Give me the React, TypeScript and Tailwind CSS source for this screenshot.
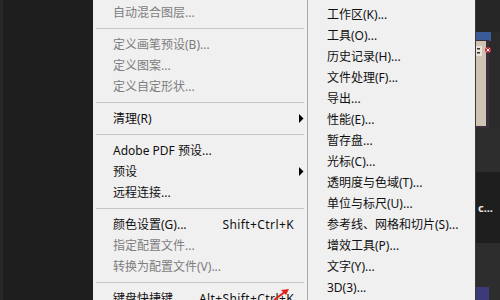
import React from "react";

type Item =
  | { type: "sep" }
  | { type: "item"; label: string; disabled?: boolean; shortcut?: string; arrow?: boolean };

const mainItems: Item[] = [
  { type: "item", label: "自动混合图层...", disabled: true },
  { type: "sep" },
  { type: "item", label: "定义画笔预设(B)...", disabled: true },
  { type: "item", label: "定义图案...", disabled: true },
  { type: "item", label: "定义自定形状...", disabled: true },
  { type: "sep" },
  { type: "item", label: "清理(R)", arrow: true },
  { type: "sep" },
  { type: "item", label: "Adobe PDF 预设..." },
  { type: "item", label: "预设", arrow: true },
  { type: "item", label: "远程连接..." },
  { type: "sep" },
  { type: "item", label: "颜色设置(G)...", shortcut: "Shift+Ctrl+K" },
  { type: "item", label: "指定配置文件...", disabled: true },
  { type: "item", label: "转换为配置文件(V)...", disabled: true },
  { type: "sep" },
  { type: "item", label: "键盘快捷键...", shortcut: "Alt+Shift+Ctrl+K" },
];

const subItems = [
  "工作区(K)...",
  "工具(O)...",
  "历史记录(H)...",
  "文件处理(F)...",
  "导出...",
  "性能(E)...",
  "暂存盘...",
  "光标(C)...",
  "透明度与色域(T)...",
  "单位与标尺(U)...",
  "参考线、网格和切片(S)...",
  "增效工具(P)...",
  "文字(Y)...",
  "3D(3)...",
];

const font = { fontFamily: '"Noto Sans", "Noto Sans CJK SC", sans-serif' };

export default function App() {
  return (
    <div
      className="relative flex h-[300px] w-[500px] overflow-hidden bg-[#1e1e1e] text-[12px] leading-[21px]"
      style={font}
    >
      {/* left dark area */}
      <div className="flex h-full w-[93px] shrink-0">
        <div className="h-full w-[3px] bg-[#272727]" />
        <div className="h-full flex-1 bg-[#1e1e1e]" />
      </div>

      {/* main menu */}
      <div className="flex h-full w-[214px] shrink-0 flex-col bg-[#f0f0f0] pt-[2px]">
        {mainItems.map((it, i) =>
          it.type === "sep" ? (
            <div key={i} className="h-[11px] shrink-0 pl-[3px] pr-[3px] pt-[5px]">
              <div className="h-px bg-[#c5c5c5]" />
            </div>
          ) : (
            <div
              key={i}
              className={`flex h-[21px] shrink-0 items-center pl-[20px] pr-[13px] ${
                it.disabled ? "text-[#7d7d7d]" : "text-[#111111]"
              }`}
            >
              <span className="whitespace-nowrap">{it.label}</span>
              <span className="flex-1" />
              {it.shortcut && (
                <span className="whitespace-nowrap tracking-[0.4px]">{it.shortcut}</span>
              )}
              {it.arrow && (
                <svg width="5" height="9" viewBox="0 0 5 9" className="-mr-[10px]">
                  <path d="M0 0 L4.5 4.5 L0 9 Z" fill="#000" />
                </svg>
              )}
            </div>
          )
        )}
      </div>

      {/* submenu */}
      <div className="flex h-full w-[168px] shrink-0 flex-col border-l border-[#a8a8a8] bg-[#f0f0f0] pt-[4px]">
        {subItems.map((s, i) => (
          <div key={i} className="flex h-[21px] shrink-0 items-center pl-[19px] text-[#111111]">
            <span className="whitespace-nowrap">{s}</span>
          </div>
        ))}
      </div>

      {/* right dark area */}
      <div className="flex h-full flex-1 flex-col border-l border-[#3a3a3a] bg-[#2a2a2a]">
        <div className="h-[32px] shrink-0 bg-[#262626]" />
        <div className="h-[96px] shrink-0">
          <svg width="25" height="96" viewBox="0 0 25 96">
            <rect x="0" y="0" width="25" height="96" fill="#2a2a2a" />
            <rect x="0" y="0" width="15" height="9" fill="#3b5a9a" />
            <rect x="0" y="8" width="13" height="88" fill="#3a2f3c" />
            <rect x="0" y="9" width="10" height="85" fill="#cfc4b4" />
            <rect x="0" y="14" width="6" height="10" fill="#e8e2d8" />
            <rect x="1" y="16" width="3" height="1.5" fill="#333" />
            <rect x="1" y="20" width="3" height="1.5" fill="#333" />
            <circle cx="12" cy="18" r="3" fill="#c0303c" />
            <path d="M10.5 16.5 L13.5 19.5 M13.5 16.5 L10.5 19.5" stroke="#fff" strokeWidth="1" />
          </svg>
        </div>
        <div className="h-[44px] shrink-0 bg-[#2d2d2d]" />
        <div className="flex h-[71px] shrink-0 items-center bg-[#1e1e1e] pl-[2px] text-[11px] font-bold text-[#e6e6e6]">
          c...
        </div>
        <div className="relative flex-1 bg-[#2d2d2d]">
          <div className="absolute bottom-0 left-0 h-[13px] w-[13px] bg-[#3c3a78]" />
        </div>
      </div>

      {/* red pointer annotation */}
      <svg
        className="absolute left-[270px] top-[286px]"
        width="22"
        height="14"
        viewBox="0 0 22 14"
      >
        <path d="M4 14 L16 5" stroke="#e0201c" strokeWidth="2" />
        <path d="M19 3 L11 4 L16 9 Z" fill="#e0201c" />
      </svg>
    </div>
  );
}
